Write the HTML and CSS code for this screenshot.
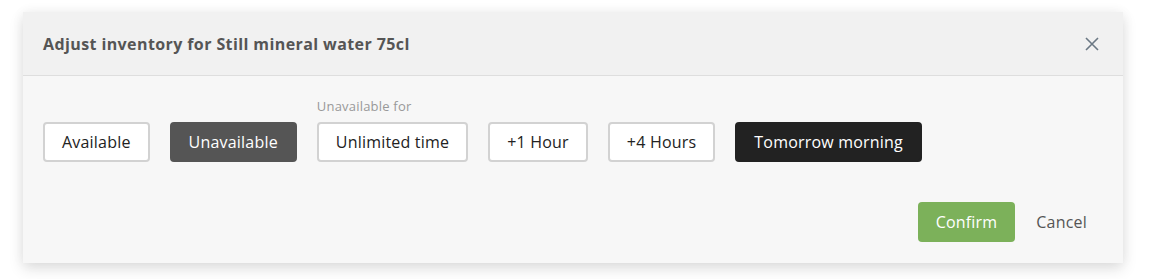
FILE: index.html
```html
<!DOCTYPE html>
<html lang="en">
<head>
    <meta charset="UTF-8">
    <title>Adjust inventory</title>
    <link rel="stylesheet" href="styles.css">
</head>
<body>

    <div class="modal">
        <div class="modal-header">
            <h2>Adjust inventory for Still mineral water 75cl</h2>
            <button class="close" aria-label="Close">
                <svg width="14" height="14" viewBox="0 0 14 14">
                    <path d="M1 1L13 13M13 1L1 13" stroke="#6b7884" stroke-width="1.6" fill="none"/>
                </svg>
            </button>
        </div>

        <div class="modal-body">
            <div class="options">
                <div class="option">
                    <button class="btn">Available</button>
                </div>
                <div class="option">
                    <button class="btn btn-grey">Unavailable</button>
                </div>
                <div class="option">
                    <span class="option-label">Unavailable for</span>
                    <button class="btn">Unlimited time</button>
                </div>
                <div class="option">
                    <button class="btn">+1 Hour</button>
                </div>
                <div class="option">
                    <button class="btn">+4 Hours</button>
                </div>
                <div class="option">
                    <button class="btn btn-dark">Tomorrow morning</button>
                </div>
            </div>
        </div>

        <div class="modal-footer">
            <button class="btn-confirm">Confirm</button>
            <button class="btn-cancel">Cancel</button>
        </div>
    </div>

</body>
</html>
```

FILE: styles.css
```css
body {
    margin: 0;
    padding-bottom: 20px;
    background: #fff;
    font-family: "Open Sans", "Noto Sans", sans-serif;
    color: #222;
}
.modal {
    width: 1100px;
    margin: 12px 0 0 23px;
    background: #f7f7f7;
    box-shadow: 0 6px 14px rgba(0, 0, 0, 0.12), 0 0 12px rgba(0, 0, 0, 0.05);
}
.modal-header {
    height: 63px;
    display: flex;
    align-items: center;
    justify-content: space-between;
    padding: 0 24px 0 20px;
    background: #f1f1f1;
    border-bottom: 1px solid #dedede;
}
.modal-header h2 {
    margin: 0;
    font-size: 16px;
    font-weight: bold;
    letter-spacing: 0.4px;
    color: #555;
}
.close {
    border: none;
    background: none;
    padding: 0;
    display: flex;
    cursor: pointer;
}
.modal-body {
    padding: 21px 20px 0;
}
.options {
    display: flex;
    align-items: flex-end;
    gap: 20px;
}
.option {
    display: flex;
    flex-direction: column;
}
.option-label {
    font-size: 13px;
    line-height: 18px;
    letter-spacing: 0.2px;
    color: #999;
    margin-bottom: 7px;
}
.btn {
    height: 40px;
    padding: 0 17px;
    font-family: inherit;
    font-size: 16px;
    letter-spacing: 0.2px;
    color: #222;
    background: #fff;
    border: 2px solid #d2d2d2;
    border-radius: 4px;
    cursor: pointer;
}
.btn-grey {
    background: #555;
    border-color: #555;
    color: #fff;
}
.btn-dark {
    background: #222;
    border-color: #222;
    color: #fff;
}
.modal-footer {
    display: flex;
    justify-content: flex-end;
    align-items: center;
    gap: 5px;
    padding: 40px 20px 21px;
}
.btn-confirm {
    height: 40px;
    padding: 0 18px;
    font-family: inherit;
    font-size: 16px;
    letter-spacing: 0.2px;
    color: #fff;
    background: #7cb15a;
    border: none;
    border-radius: 4px;
    cursor: pointer;
}
.btn-cancel {
    height: 40px;
    padding: 0 16px;
    font-family: inherit;
    font-size: 16px;
    letter-spacing: 0.2px;
    color: #555;
    background: none;
    border: none;
    cursor: pointer;
}
```
